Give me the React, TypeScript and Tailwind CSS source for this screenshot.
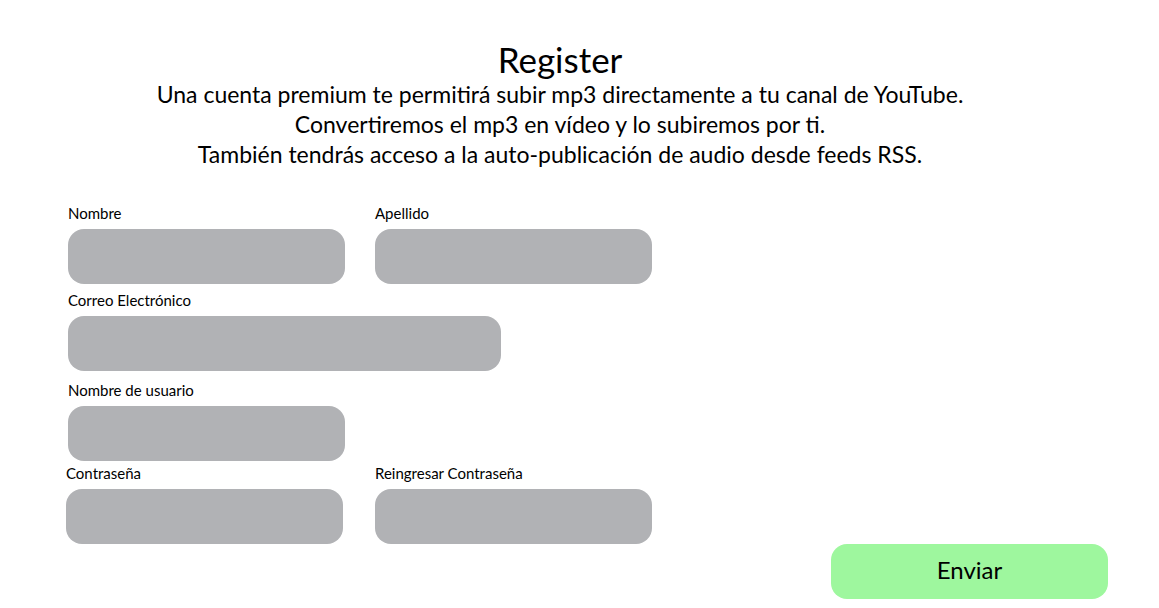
const fieldBox = 'h-[55px] rounded-[16px] bg-[#b1b2b5]';

function Field({ label, width, className }: { label: string; width: string; className?: string }) {
    return (
        <div className={`flex flex-col ${className ?? ''}`}>
            <label className="text-[15px] leading-[20px] text-black">{label}</label>
            <div className={`${fieldBox} ${width} mt-[6px]`} />
        </div>
    );
}

export default function App() {
    return (
        <div className="w-full h-[608px] bg-white text-black font-['Lato',sans-serif] overflow-hidden">
            <div className="w-[1120px] text-center pt-[39px]">
                <h1 className="text-[35px] leading-[40px]">Register</h1>
                <p className="text-[23px] leading-[30px]">
                    Una cuenta premium te permitirá subir mp3 directamente a tu canal de YouTube.
                    <br />
                    Convertiremos el mp3 en vídeo y lo subiremos por ti.
                    <br />
                    También tendrás acceso a la auto-publicación de audio desde feeds RSS.
                </p>
            </div>

            <form className="flex flex-col pl-[68px] pr-[51px] mt-[34px]">
                <div className="flex flex-row gap-[30px]">
                    <Field label="Nombre" width="w-[277px]" />
                    <Field label="Apellido" width="w-[277px]" />
                </div>
                <Field label="Correo Electrónico" width="w-[433px]" className="mt-[6px]" />
                <Field label="Nombre de usuario" width="w-[277px]" className="mt-[9px]" />
                <div className="flex flex-row gap-[32px] mt-[2px] -ml-[2px]">
                    <Field label="Contraseña" width="w-[277px]" />
                    <Field label="Reingresar Contraseña" width="w-[277px]" />
                </div>
                <div className="flex justify-end">
                    <button
                        type="button"
                        className="w-[277px] h-[55px] pb-[4px] rounded-[16px] bg-[#9ef79e] text-[24px] text-black"
                    >
                        Enviar
                    </button>
                </div>
            </form>
        </div>
    );
}
